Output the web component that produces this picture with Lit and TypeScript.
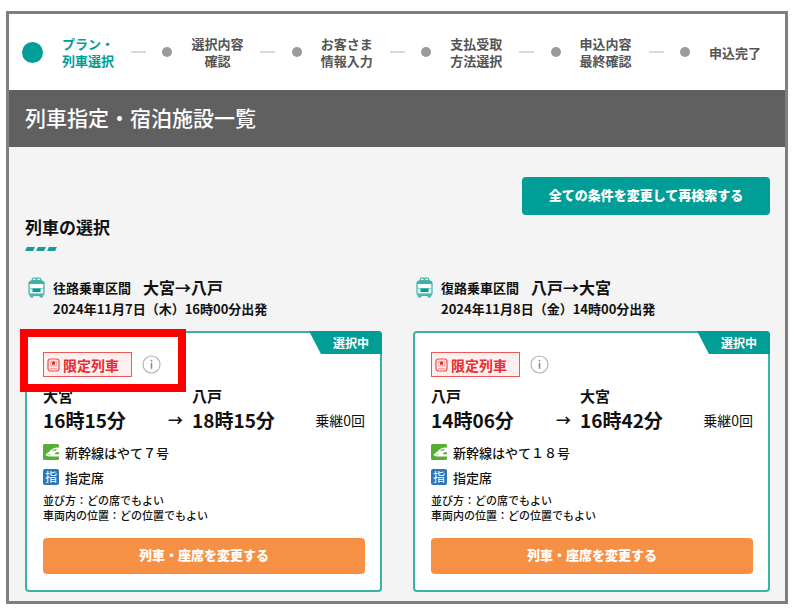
import { LitElement, html, css, svg } from "lit";
import { customElement, property } from "lit/decorators.js";

interface Leg {
  label: string;
  route: string;
  date: string;
  from: string;
  to: string;
  departs: string;
  arrives: string;
  train: string;
  highlighted: boolean;
}

const STEPS: string[] = [
  "プラン・\n列車選択",
  "選択内容\n確認",
  "お客さま\n情報入力",
  "支払受取\n方法選択",
  "申込内容\n最終確認",
  "申込完了",
];

const LEGS: Leg[] = [
  {
    label: "往路乗車区間",
    route: "大宮→八戸",
    date: "2024年11月7日（木）16時00分出発",
    from: "大宮",
    to: "八戸",
    departs: "16時15分",
    arrives: "18時15分",
    train: "新幹線はやて７号",
    highlighted: true,
  },
  {
    label: "復路乗車区間",
    route: "八戸→大宮",
    date: "2024年11月8日（金）14時00分出発",
    from: "八戸",
    to: "大宮",
    departs: "14時06分",
    arrives: "16時42分",
    train: "新幹線はやて１８号",
    highlighted: false,
  },
];

const trainIcon = svg`
  <svg width="17" height="21" viewBox="0 0 17 21" aria-hidden="true">
    <path d="M4.500.5h8l1.500 3.500H3z" fill="#4db6ae"/>
    <path d="M5 1.800h2.500v1.200H5zM9.500 1.800H12v1.200H9.500z" fill="#fff"/>
    <rect x="1" y="4" width="15" height="14.500" rx="2.500" fill="#e4f3f2" stroke="#3fb0a8" stroke-width="1.200"/>
    <path d="M1 6.500Q1 4 3.500 4h10Q16 4 16 6.500V7H1z" fill="#3fb0a8"/>
    <rect x="2.500" y="7" width="12" height="4" fill="#fff"/>
    <path d="M1.500 11h14v1.200h-14z" fill="#8fd0cb"/>
    <rect x="4.500" y="11.500" width="8" height="3.500" fill="#009e96"/>
    <path d="M2 16.500h13v2H2zM2 18.500h3.500v2H2zM11.500 18.500H15v2h-3.500z" fill="#4db6ae"/>
  </svg>`;

const limitedIcon = svg`
  <svg width="13" height="14" viewBox="0 0 13 14" aria-hidden="true">
    <rect x="1" y="1" width="11" height="12" rx="2.500" fill="#fff0f0" stroke="#ee4a4f" stroke-width="1.200"/>
    <path d="M3.300 3.300h6.400v4.700H3.300z" fill="#fff" stroke="#f28387" stroke-width=".8"/>
    <path d="M6.500 3l.8 1.300 1.500.2-1.100 1.100.3 1.600-1.500-.8-1.500.8.3-1.600-1.100-1.100 1.500-.2z" fill="#e0101a"/>
    <path d="M3 10.800h7" stroke="#f28387"/>
  </svg>`;

const infoIcon = svg`
  <svg width="19" height="19" viewBox="0 0 19 19" aria-hidden="true">
    <circle cx="9.500" cy="9.500" r="8.500" fill="#fff" stroke="#b4b4b4" stroke-width="1.200"/>
    <circle cx="9.500" cy="5.600" r=".9" fill="#888"/>
    <path d="M9.500 7.800v6" stroke="#888" stroke-width="1.500"/>
  </svg>`;

const shinkansenIcon = svg`
  <svg width="16" height="16" viewBox="0 0 16 16" aria-hidden="true">
    <rect width="16" height="16" rx="1.500" fill="#56ae35"/>
    <path d="M16 3.500C11 3.500 8.500 5 6.500 7.500 4.500 9 3 10 2.500 11.300c1.500.9 3.500 1.200 6 1.200H16v-2.300h-4.500l1.500-2H16z" fill="#fff"/>
    <path d="M8.500 6.800Q10.500 5 14 5l-1.500 1.800z" fill="#56ae35"/>
    <path d="M4 10.500l3-.5 1 1.200H5z" fill="#a9d897"/>
  </svg>`;

@customElement("step-bar")
class StepBar extends LitElement {
  static styles = css`
    :host { display: block; }
    .steps {
      display: flex;
      align-items: center;
      justify-content: space-between;
      height: 76px;
      margin: 0;
      padding: 0 24px 0 13px;
      list-style: none;
      background: #fff;
    }
    .step { display: flex; align-items: center; }
    .dot {
      width: 10px;
      height: 10px;
      margin-right: 19px;
      border-radius: 50%;
      background: #9b9b9b;
    }
    .label {
      font-size: 13px;
      line-height: 17px;
      font-weight: 700;
      text-align: center;
      white-space: pre-line;
      color: #555;
    }
    .dash {
      width: 15px;
      height: 2px;
      margin-left: 17px;
      background: #d9d9d9;
    }
    .current .dot { width: 21px; height: 21px; background: #009e96; }
    .current .label { color: #009e96; text-align: left; }
  `;

  render() {
    return html`<ol class="steps">
      ${STEPS.map(
        (label, i) => html`<li class="step ${i === 0 ? "current" : ""}">
          <span class="dot"></span>
          <span class="label">${label}</span>
          ${i < STEPS.length - 1 ? html`<span class="dash"></span>` : ""}
        </li>`
      )}
    </ol>`;
  }
}

@customElement("leg-panel")
class LegPanel extends LitElement {
  @property({ attribute: false }) leg!: Leg;

  static styles = css`
    :host { display: block; min-width: 0; }
    .head { display: flex; gap: 8px; padding-left: 3px; margin-bottom: 12px; font-weight: 700; }
    .head svg { flex: none; }
    .section { display: flex; align-items: center; gap: 12px; margin: 0; line-height: 21px; }
    .kind { font-size: 13px; }
    .route { font-size: 16px; }
    .date { margin: 0; font-size: 13px; line-height: 21px; }
    .card {
      position: relative;
      padding: 19px 15px 16px 16px;
      border: 2px solid #3cb0a9;
      border-radius: 4px;
      background: #fff;
    }
    .tag {
      position: absolute;
      top: -2px;
      right: -2px;
      padding: 0 13px 0 24px;
      font-size: 12px;
      line-height: 23px;
      font-weight: 700;
      color: #fff;
      background: #009e96;
      border-top-right-radius: 4px;
      clip-path: polygon(0 0, 100% 0, 100% 100%, 12px 100%);
    }
    .offer { position: relative; display: inline-flex; align-items: center; gap: 10px; vertical-align: top; }
    .limited {
      display: flex;
      align-items: center;
      gap: 3px;
      box-sizing: border-box;
      height: 25px;
      padding: 0 12px 0 3px;
      border: 1px solid #f0575b;
      background: #fff0f0;
      color: #ec2a31;
      font-size: 14px;
      line-height: 22px;
      font-weight: 700;
    }
    .info { display: flex; padding: 0; border: 0; background: none; }
    .ring {
      position: absolute;
      inset: -23px -25px -15px -23px;
      z-index: 1;
      border: 8px solid #fe0000;
      pointer-events: none;
    }
    .times {
      display: grid;
      grid-template-columns: 125px 24px 1fr auto;
      align-items: center;
      margin-top: 7px;
      font-weight: 700;
    }
    .station { font-size: 15px; line-height: 23px; }
    .arrival { grid-column: 3 / 5; }
    .time { font-size: 19px; line-height: 26px; }
    .arrow { font-size: 15px; line-height: 26px; }
    .transfers { font-size: 14px; font-weight: 400; line-height: 26px; }
    .row {
      display: flex;
      align-items: center;
      gap: 6px;
      height: 20px;
      margin-top: 5px;
      font-size: 13px;
      font-weight: 500;
    }
    .train { margin-top: 9px; }
    .seat {
      width: 16px;
      height: 16px;
      border-radius: 2px;
      background: #2a78b8;
      color: #fff;
      font-size: 12px;
      line-height: 16px;
      font-weight: 400;
      text-align: center;
    }
    .notes { margin: 6px 0 15px; font-size: 11px; line-height: 15px; font-weight: 500; }
    .note { display: block; }
    .change {
      display: block;
      width: 100%;
      height: 36px;
      padding: 0 0 4px;
      border: 0;
      border-radius: 4px;
      background: #f59044;
      color: #fff;
      font: inherit;
      font-size: 13px;
      font-weight: 900;
    }
  `;

  render() {
    const l = this.leg;
    return html`
      <header class="head">
        ${trainIcon}
        <div>
          <h3 class="section"><span class="kind">${l.label}</span><span class="route">${l.route}</span></h3>
          <p class="date">${l.date}</p>
        </div>
      </header>
      <article class="card">
        <span class="tag">選択中</span>
        <div class="offer">
          <span class="limited">${limitedIcon}<span>限定列車</span></span>
          <button class="info" type="button" aria-label="限定列車">${infoIcon}</button>
          ${l.highlighted ? html`<span class="ring"></span>` : ""}
        </div>
        <div class="times">
          <span class="station">${l.from}</span><span></span>
          <span class="station arrival">${l.to}</span>
          <span class="time">${l.departs}</span><span class="arrow">→</span>
          <span class="time">${l.arrives}</span><span class="transfers">乗継0回</span>
        </div>
        <div class="row train">${shinkansenIcon}<span>${l.train}</span></div>
        <div class="row"><span class="seat">指</span><span>指定席</span></div>
        <p class="notes">
          <span class="note">並び方：どの席でもよい</span>
          <span class="note">車両内の位置：どの位置でもよい</span>
        </p>
        <button class="change" type="button">列車・座席を変更する</button>
      </article>
    `;
  }
}

@customElement("app-root")
class AppRoot extends LitElement {
  static styles = css`
    :host {
      display: block;
      padding: 11px 8px 9px 6px;
      background: #fff;
      color: #111;
      font-family: "Noto Sans CJK JP", "Noto Sans", sans-serif;
    }
    .frame { border: 3px solid #7f7f7f; background: #f4f4f4; }
    .title {
      margin: 0;
      padding: 0 16px 2px;
      font-size: 21px;
      line-height: 55px;
      font-weight: 500;
      color: #fff;
      background: #606060;
    }
    .content { padding: 30px 15px 9px 16px; }
    .search {
      display: block;
      width: 248px;
      height: 38px;
      margin-left: auto;
      padding: 0 0 4px;
      border: 0;
      border-radius: 4px;
      background: #009e96;
      color: #fff;
      font: inherit;
      font-size: 13px;
      font-weight: 900;
    }
    .heading { margin: 0; font-size: 17px; line-height: 24px; font-weight: 700; }
    .marks { display: flex; gap: 3px; padding: 8px 0 26px 1px; }
    .mark { width: 8px; height: 4px; background: #169d96; transform: skewX(-25deg); }
    .legs { display: grid; grid-template-columns: 1fr 1fr; gap: 31px; }
  `;

  render() {
    return html`
      <main class="frame">
        <step-bar></step-bar>
        <h1 class="title">列車指定・宿泊施設一覧</h1>
        <div class="content">
          <button class="search" type="button">全ての条件を変更して再検索する</button>
          <h2 class="heading">列車の選択</h2>
          <div class="marks"><span class="mark"></span><span class="mark"></span><span class="mark"></span></div>
          <div class="legs">${LEGS.map((leg) => html`<leg-panel .leg=${leg}></leg-panel>`)}</div>
        </div>
      </main>
    `;
  }
}
